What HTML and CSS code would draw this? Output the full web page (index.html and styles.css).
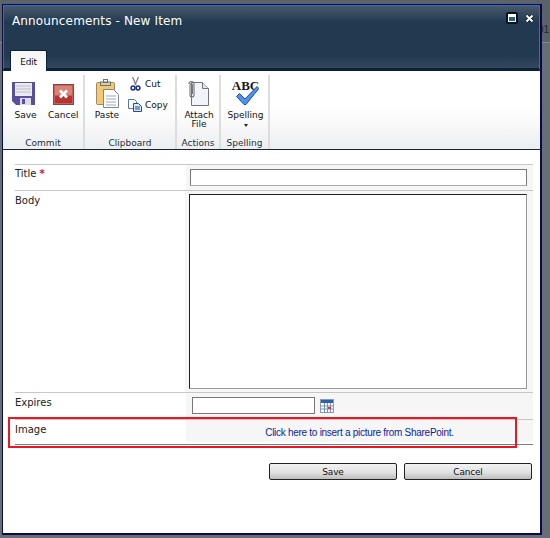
FILE: index.html
```html
<!DOCTYPE html>
<html lang="en">
<head>
    <meta charset="UTF-8">
    <meta name="viewport" content="width=device-width, initial-scale=1.0">
    <title>Announcements - New Item</title>
    <link rel="stylesheet" href="styles.css">
</head>
<body>
    <div class="behind-text">01</div>
    <div class="dialog">
        <div class="title-bar">
            <div class="title-row">
                <h1>Announcements - New Item</h1>
                <div class="window-icons">
                    <svg width="12" height="12" viewBox="0 0 12 12"><rect x="0.500" y="0.500" width="11" height="11" rx="1.500" fill="#08121c" stroke="#08121c"/><rect x="2" y="2" width="8" height="8" fill="#fff"/><rect x="3" y="5" width="6" height="4" fill="#2c5a8c"/></svg>
                    <svg width="9" height="9" viewBox="0 0 9 9"><path d="M1.500 1.500l6 6M7.500 1.500l-6 6" stroke="#08121c" stroke-width="3.400"/><path d="M1.500 1.500l6 6M7.500 1.500l-6 6" stroke="#fff" stroke-width="2"/></svg>
                </div>
            </div>
            <div class="tab">Edit</div>
        </div>

        <div class="ribbon">
            <div class="group group-commit">
                <div class="group-items">
                    <div class="big-btn btn-save">
                        <div class="btn-icon">
                            <svg class="icon-save" width="23" height="23" viewBox="0 0 23 23"><path d="M0 0h23v23H4l-4-4z" fill="#5a4f9e"/><rect x="3" y="1" width="17" height="13" fill="#ebebef"/><path d="M4 4h15M4 7h15M4 10h15" stroke="#bcbcc6"/><rect x="8" y="16" width="11" height="7" fill="#dcdce8"/><rect x="10" y="17" width="3" height="5" fill="#5a4f9e"/></svg>
                        </div>
                        <span>Save</span>
                    </div>
                    <div class="big-btn btn-cancel">
                        <div class="btn-icon">
                            <svg class="icon-cancel" width="21" height="21" viewBox="0 0 21 21"><rect x="0.500" y="0.500" width="20" height="20" fill="#c9605a" stroke="#7d4a46"/><rect x="2" y="2" width="17" height="9" fill="#d98278"/><rect x="2" y="12" width="17" height="7" fill="#b8322f"/><path d="M7 6.500l7 7M14 6.500l-7 7" stroke="#fff" stroke-width="2.800"/></svg>
                        </div>
                        <span>Cancel</span>
                    </div>
                </div>
                <div class="group-label">Commit</div>
            </div>
            <div class="group group-clipboard">
                <div class="group-items">
                    <div class="big-btn btn-paste">
                        <div class="btn-icon">
                            <svg class="icon-paste" width="23" height="29" viewBox="0 0 23 29"><rect x="0.500" y="3.500" width="18" height="22" rx="1" fill="#f3c873" stroke="#a08a5c"/><rect x="4.500" y="3" width="10" height="3.500" fill="#d0ccc0" stroke="#77735f"/><rect x="7.500" y="0.500" width="4" height="3" fill="none" stroke="#77735f"/><path d="M7.500 10.500h10l5 5v13h-15z" fill="#fff" stroke="#7b8794"/><path d="M10 17h10M10 20h10M10 23h10M10 26h10" stroke="#9aa7b5"/></svg>
                        </div>
                        <span>Paste</span>
                    </div>
                    <div class="small-btns">
                        <div class="small-btn">
                            <svg width="14" height="14" viewBox="0 0 14 14"><path d="M4.500 0l3.500 8M10.500 0l-3.500 8" stroke="#7d828c" stroke-width="1.300"/><circle cx="5" cy="11" r="1.900" fill="none" stroke="#1c2f8c" stroke-width="1.500"/><circle cx="10" cy="11" r="1.900" fill="none" stroke="#1c2f8c" stroke-width="1.500"/></svg>
                            <span>Cut</span>
                        </div>
                        <div class="small-btn">
                            <svg width="14" height="13" viewBox="0 0 14 13"><path d="M0.500 0.500h6l2 2v7h-8z" fill="#fff" stroke="#4d79b0"/><path d="M5.500 4.500h5l3 3v5h-8z" fill="#dce8f6" stroke="#1f4f8f"/><path d="M7 8h5M7 10h5" stroke="#1f4f8f"/></svg>
                            <span>Copy</span>
                        </div>
                    </div>
                </div>
                <div class="group-label">Clipboard</div>
            </div>
            <div class="group group-actions">
                <div class="group-items">
                    <div class="big-btn btn-shifted">
                        <div class="btn-icon">
                            <svg class="icon-attach" width="22" height="27" viewBox="0 0 22 27"><path d="M3.500 3.500h11l6 6v17h-17z" fill="#f2f4fa" stroke="#6e7480"/><path d="M14.500 3.500v6h6" fill="#dfe4ee" stroke="#6e7480"/><path d="M1 5a2.500 2.500 0 0 1 5 0v11a2 2 0 0 1-4 0V6a1.200 1.200 0 0 1 2.400 0v9" fill="none" stroke="#6f7379" stroke-width="1.100"/></svg>
                        </div>
                        <span>Attach<br>File</span>
                    </div>
                </div>
                <div class="group-label">Actions</div>
            </div>
            <div class="group group-spelling">
                <div class="group-items">
                    <div class="big-btn btn-shifted">
                        <div class="btn-icon spell-icon">
                            <span class="abc">ABC</span>
                            <svg width="23" height="19" viewBox="0 0 23 19"><path d="M0.500 10.500L3.500 7.500l5.500 5.500L21 0.500l1.800 2L10 18.500H8z" fill="#4f92e6" stroke="#1f4fa8"/></svg>
                        </div>
                        <span>Spelling</span>
                        <div class="caret"></div>
                    </div>
                </div>
                <div class="group-label">Spelling</div>
            </div>
        </div>

        <div class="form">
            <div class="form-row row-title">
                <div class="field-label">Title <span class="required">*</span></div>
                <div class="field-value"><input type="text" class="title-input"></div>
            </div>
            <div class="form-row row-body">
                <div class="field-label">Body</div>
                <div class="field-value"><div class="body-box"></div></div>
            </div>
            <div class="form-row row-expires">
                <div class="field-label">Expires</div>
                <div class="field-value expires-value">
                    <input type="text" class="date-input">
                    <svg width="14" height="14" viewBox="0 0 14 14"><rect x="0.500" y="0.500" width="13" height="13" fill="#fff" stroke="#8a9bb0"/><rect x="1" y="1" width="12" height="3" fill="#2f5fa8"/><path d="M1 7h12M1 10h12M4.500 4v9M7.500 4v9M10.500 4v9" stroke="#6f93c4"/><rect x="8" y="8" width="3" height="2" fill="#e0392b"/></svg>
                </div>
            </div>
            <div class="form-row row-image">
                <div class="field-label">Image</div>
                <div class="field-value image-value"><a href="#" class="picture-link">Click here to insert a picture from SharePoint.</a></div>
            </div>
            <div class="red-outline"></div>
        </div>

        <div class="actions">
            <button class="button">Save</button>
            <button class="button">Cancel</button>
        </div>
    </div>
</body>
</html>
```

FILE: styles.css
```css
html, body {
    margin: 0;
    height: 538px;
    overflow: hidden;
}
body {
    font-family: "Liberation Sans", Arial, sans-serif;
    font-size: 10px;
    color: #111;
    background: linear-gradient(#5c6269 42px, #858a90 42px, #858a90 43px, #686e76 43px);
    position: relative;
    box-sizing: border-box;
    padding: 4px 0 0 2px;
}
.behind-text {
    position: absolute;
    left: 538px;
    top: 24px;
    font-size: 10px;
    color: #1c2630;
}
.dialog {
    position: relative;
    width: 540px;
    height: 531px;
    background-color: white;
    border: 1px solid #0a0a4a;
    border-right-width: 2px;
    border-bottom-width: 2px;
    box-sizing: border-box;
}
.title-bar {
    height: 62px;
    background: linear-gradient(#48596b 0, #223a50 16px, #223a50 50px, #33485d 62px);
    border: 1px solid #2f6fc4;
    border-bottom: 3px solid #0a2238;
    position: relative;
}
.title-row {
    display: flex;
    justify-content: space-between;
    align-items: flex-start;
    padding: 6px 5px 0 8px;
}
.title-row h1 {
    margin: 0;
    font-family: "DejaVu Sans", sans-serif;
    font-size: 12px;
    line-height: 18px;
    font-weight: normal;
    color: white;
    letter-spacing: 0.15px;
}
.window-icons {
    display: flex;
    align-items: center;
    gap: 7px;
    height: 12px;
}
.tab {
    position: absolute;
    left: 6px;
    bottom: -3px;
    width: 35px;
    height: 20px;
    background: linear-gradient(#f4f4f4, white);
    border: 1px solid #0a2238;
    border-bottom: none;
    border-radius: 2px 2px 0 0;
    text-align: center;
    line-height: 22px;
    font-family: "DejaVu Sans", sans-serif;
    font-size: 9px;
    letter-spacing: -0.2px;
}
.ribbon {
    display: flex;
    height: 79px;
    padding-top: 4px;
    box-sizing: border-box;
    border-bottom: 1px solid #1a2430;
    background: linear-gradient(white 0, white 34px, #fcfcfc 45px, #edeef0 77px);
    font-family: "DejaVu Sans", sans-serif;
    font-size: 9px;
}
.group {
    display: flex;
    flex-direction: column;
    justify-content: space-between;
    border-right: 2px solid #dcdddf;
    box-sizing: border-box;
    height: 74px;
}
.group-commit { width: 82px; }
.group-clipboard { width: 92px; }
.group-actions { width: 44px; }
.group-spelling { width: 49px; }
.group-items {
    display: flex;
}
.group-label {
    text-align: center;
    line-height: 12px;
    color: #1f3040;
}
.big-btn {
    flex: 1;
    display: flex;
    flex-direction: column;
    align-items: center;
    text-align: center;
    line-height: 9px;
    height: 56px;
}
.btn-save {
    flex: 0 0 45px;
}
.btn-cancel {
    flex: 0 0 30px;
}
.btn-paste {
    flex: 0 0 44px;
}
.btn-shifted {
    padding-left: 2px;
}
.btn-icon {
    height: 36px;
    display: flex;
    justify-content: center;
    align-items: flex-start;
}
.icon-save {
    margin: 7px 4px 0 0;
}
.icon-cancel {
    margin-top: 9px;
}
.icon-paste {
    margin-top: 4px;
}
.icon-attach {
    margin-top: 4px;
}
.small-btns {
    display: flex;
    flex-direction: column;
    gap: 7px;
    padding-top: 2px;
    margin-left: -1px;
}
.small-btn {
    display: flex;
    align-items: center;
    gap: 3px;
    height: 14px;
}
.small-btn svg {
    flex: none;
}
.spell-icon {
    position: relative;
    width: 30px;
}
.abc {
    display: block;
    font-family: "Liberation Serif", serif;
    font-weight: bold;
    font-size: 13px;
    line-height: 13px;
    color: #1a1a1a;
    margin-top: 4px;
}
.spell-icon svg {
    position: absolute;
    left: 5px;
    top: 11px;
}
.caret {
    width: 0;
    height: 0;
    border: 2.500px solid transparent;
    border-top: 3px solid #222;
    border-bottom: none;
    margin-top: 4px;
}
.form {
    position: relative;
    margin: 14px 7px 0 12px;
    border-top: 1px solid #c7c7c7;
    font-family: "DejaVu Sans", sans-serif;
    font-size: 10px;
}
.form-row {
    display: flex;
    box-sizing: border-box;
    border-bottom: 1px solid #c7c7c7;
}
.field-label {
    width: 171px;
    padding-top: 3px;
    line-height: 13px;
    color: #222;
}
.row-title .field-label {
    padding-top: 2px;
}
.required {
    color: #e01010;
    font-weight: bold;
}
.field-value {
    flex: 1;
    background-color: #f6f6f6;
    padding: 4px 6px 0 4px;
    box-sizing: border-box;
}
.row-title { height: 26px; }
.row-body { height: 202px; }
.row-expires { height: 27px; }
.row-image {
    height: 25px;
    border-bottom: 1px solid #808080;
}
.title-input {
    display: block;
    width: 100%;
    height: 17px;
    box-sizing: border-box;
    border: 1px solid #777;
    border-bottom-color: #aaa;
    background: white;
    margin: 0;
    padding: 0;
}
.body-box {
    width: 338px;
    height: 195px;
    box-sizing: border-box;
    margin-top: -1px;
    border: 1px solid #222;
    border-right-color: #999;
    border-bottom-color: #999;
    background: white;
}
.expires-value {
    display: flex;
    gap: 5px;
    align-items: flex-start;
    padding-left: 6px;
}
.expires-value svg {
    margin-top: 2px;
}
.date-input {
    width: 123px;
    height: 17px;
    box-sizing: border-box;
    border: 1px solid #777;
    background: white;
    margin: 0;
    padding: 0;
}
.image-value {
    text-align: center;
    padding: 6px 0 0;
    margin-bottom: 2px;
    line-height: 14px;
}
.picture-link {
    color: #0b1f9c;
    text-decoration: none;
    font-family: "Liberation Sans", Arial, sans-serif;
    font-size: 10px;
    letter-spacing: -0.28px;
}
.red-outline {
    position: absolute;
    left: -7px;
    top: 252px;
    width: 505px;
    height: 27px;
    border: 2px solid #ee1420;
}
.actions {
    display: flex;
    justify-content: flex-end;
    gap: 7px;
    margin: 18px 8px 0 0;
}
.button {
    width: 128px;
    height: 17px;
    padding: 0;
    font-family: "DejaVu Sans", sans-serif;
    font-size: 9px;
    letter-spacing: -0.2px;
    color: #111;
    background: linear-gradient(#f2f2f2, #e2e2e2 55%, #bdbdbd);
    border: 1px solid #222;
    border-radius: 2px;
}
```
